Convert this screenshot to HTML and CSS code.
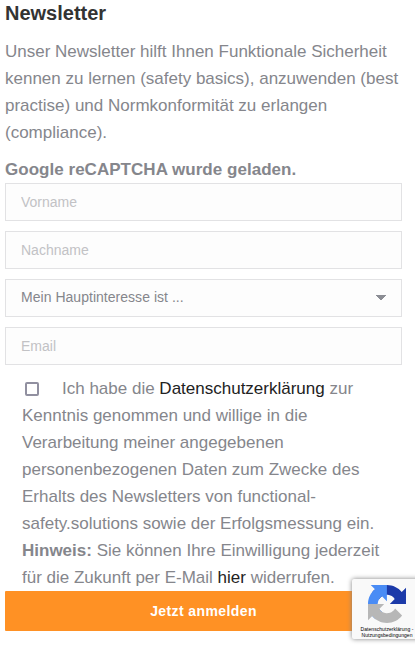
FILE: index.html
```html
<!DOCTYPE html>
<html lang="de">
<head>
<meta charset="utf-8">
<title>Newsletter</title>
<link rel="stylesheet" href="styles.css">
</head>
<body>
<section class="newsletter">
  <h3 class="title">Newsletter</h3>
  <p class="intro">Unser Newsletter hilft Ihnen Funktionale Sicherheit kennen zu lernen (safety basics), anzuwenden (best practise) und Normkonformität zu erlangen (compliance).</p>
  <form class="form">
    <strong class="status">Google reCAPTCHA wurde geladen.</strong>
    <div class="fields">
      <input class="field" type="text" placeholder="Vorname">
      <input class="field" type="text" placeholder="Nachname">
      <div class="field select"><span>Mein Hauptinteresse ist ...</span>
        <svg class="caret" width="10" height="5" viewBox="0 0 10 5"><path d="M0 0h10v1H9v1H8v1H7v1H6v1H4V4H3V3H2V2H1V1H0z" fill="#8b8d94"/></svg>
      </div>
      <input class="field" type="email" placeholder="Email">
    </div>
    <div class="consent"><span class="checkbox"></span>Ich habe die <a>Datenschutzerklärung</a> zur Kenntnis genommen und willige in die Verarbeitung meiner angegebenen personenbezogenen Daten zum Zwecke des Erhalts des Newsletters von functional-safety.solutions sowie der Erfolgsmessung ein. <strong>Hinweis:</strong> Sie können Ihre Einwilligung jederzeit für die Zukunft per E-Mail <a>hier</a> widerrufen.</div>
    <button class="submit" type="button">Jetzt anmelden</button>
  </form>
</section>
<aside class="badge">
  <svg class="logo" width="38" height="38" viewBox="0 0 64 64">
    <path fill="#1c3aa9" d="M64 31.955l-.033-1.37V4.687l-7.16 7.16C50.948 4.674 42.033.093 32.05.093c-10.4 0-19.622 4.96-25.458 12.64l11.736 11.86a15.55 15.55 0 0 1 4.754-5.334c2.05-1.6 4.952-2.906 8.968-2.906.485 0 .86.057 1.135.163 4.976.393 9.288 3.14 11.828 7.124l-8.307 8.307L64 31.953"/>
    <path fill="#4a8cf5" d="M31.862.094l-1.37.033H4.594l7.16 7.16C4.58 13.147 0 22.06 0 32.046c0 10.4 4.96 19.622 12.64 25.458L24.5 45.768a15.55 15.55 0 0 1-5.334-4.754c-1.6-2.05-2.906-4.952-2.906-8.968 0-.485.057-.86.163-1.135.393-4.976 3.14-9.288 7.124-11.828l8.307 8.307L31.86.095"/>
    <path fill="#b7b7b7" d="M.001 32.045l.033 1.37v25.898l7.16-7.16c5.86 7.173 14.774 11.754 24.76 11.754 10.4 0 19.622-4.96 25.458-12.64l-11.736-11.86a15.55 15.55 0 0 1-4.754 5.334c-2.05 1.6-4.952 2.906-8.968 2.906-.485 0-.86-.057-1.135-.163-4.976-.393-9.288-3.14-11.828-7.124l8.307-8.307c-10.522.04-22.4.066-27.295-.005"/>
  </svg>
  <div class="terms">Datenschutzerklärung -<br>Nutzungsbedingungen</div>
</aside>
</body>
</html>
```
FILE: styles.css
```css
* { box-sizing: border-box; }
html { overflow: hidden; }
body {
  margin: 0;
  height: 645px;
  overflow: hidden;
  background: #fff;
  color: #85868c;
  font: 17px/27px "Liberation Sans", Arial, sans-serif;
}
.newsletter { width: 402px; padding-left: 5px; }
.title {
  margin: 0 0 12px;
  color: #333;
  font-size: 20px;
  line-height: 26px;
}
.intro { margin: 0 -10px 10px 0; }
.status { display: block; height: 27px; letter-spacing: 0.03px; }
.fields { display: flex; flex-direction: column; gap: 10px; }
.field {
  width: 100%;
  height: 38px;
  margin: 0;
  padding: 0 15px;
  border: 1px solid #e2e2e4;
  border-radius: 0;
  background: #fdfdfd;
  color: #85868c;
  font: 14px/20px "Liberation Sans", Arial, sans-serif;
}
.field::placeholder { color: #c2c2c5; opacity: 1; }
.select {
  display: flex;
  align-items: center;
  justify-content: space-between;
  padding-bottom: 2px;
  letter-spacing: 0.03px;
}
.caret { display: block; }
.consent { padding: 10px 17px 0; }
.consent a { color: #222; }
.consent a, .consent strong { line-height: 1; }
.checkbox {
  display: inline-block;
  width: 14px;
  height: 14px;
  margin: 0 23px 0 3px;
  border: 2px solid #9190a0;
  border-radius: 2px;
  vertical-align: -2px;
}
.submit {
  display: block;
  width: 100%;
  height: 40px;
  padding: 0;
  border: 0;
  border-radius: 1px;
  background: #ff9124;
  color: #fff;
  font: bold 14px/20px "Liberation Sans", Arial, sans-serif;
  letter-spacing: 0.4px;
}
.badge {
  position: absolute;
  left: 352px;
  top: 579px;
  width: 70px;
  height: 60px;
  padding-top: 6px;
  border-radius: 2px;
  background: #f9f9f9;
  box-shadow: 0 0 5px gray;
}
.logo { display: block; margin-left: 16px; }
.terms {
  width: 70px;
  margin-top: 3px;
  color: #000;
  font: 5px/6px "Liberation Sans", Arial, sans-serif;
  letter-spacing: 0.05px;
  text-align: center;
  white-space: nowrap;
}
```
